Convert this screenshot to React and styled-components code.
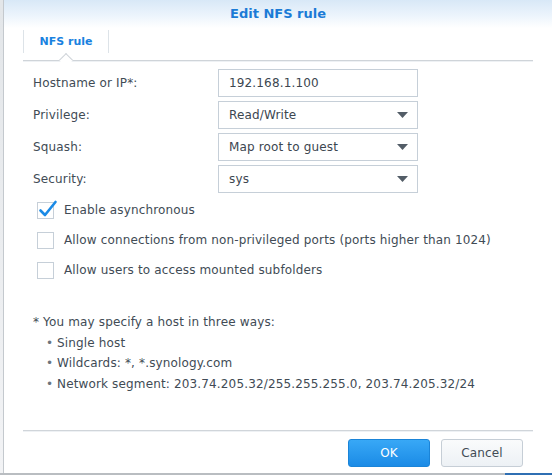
import React from 'react';
import styled, { createGlobalStyle } from 'styled-components';

const Global = createGlobalStyle`
  html, body { margin: 0; padding: 0; background: #ffffff; }
  body { font-family: "DejaVu Sans", Verdana, sans-serif; font-size: 12px; color: #414b55; letter-spacing: 0.15px; }
  * { box-sizing: border-box; }
`;

const Screen = styled.div`
  width: 552px;
  height: 475px;
  overflow: hidden;
  display: grid;
  grid-template-columns: 3px 1fr;
  grid-template-rows: 473px 2px;
  background: #eef0f2;
`;

const Edge = styled.div`
  background: linear-gradient(#e3e6e9, #f2f3f5);
`;

const Dialog = styled.div`
  background: #ffffff;
  border-left: 1px solid #c4c9ce;
  display: flex;
  flex-direction: column;
`;

const BottomStrip = styled.div`
  grid-column: 1 / -1;
  display: flex;
`;

const StripSeg = styled.div`
  height: 2px;
  width: ${(p) => p.w};
  flex: ${(p) => (p.w ? 'none' : '1')};
  background: ${(p) => p.color};
`;

const Header = styled.div`
  height: 28px;
  line-height: 27px;
  text-align: center;
  background: linear-gradient(#d8e8f7 0%, #ecf4fc 55%, #ffffff 100%);
  color: #1b7bd6;
  font-weight: bold;
  font-size: 13px;
  letter-spacing: 0;
`;

const Body = styled.div`
  padding: 0 19px;
  display: flex;
  flex-direction: column;
`;

const TabBar = styled.div`
  margin-top: 2px;
  height: 31px;
  display: flex;
  align-items: flex-start;
  border-bottom: 1px solid #cfd4d9;
  box-shadow: 0 1px 0 #eef1f4;
`;

const Tab = styled.div`
  position: relative;
  width: 86px;
  height: 23px;
  line-height: 23px;
  text-align: center;
  border-left: 1px solid #dde3e8;
  border-right: 1px solid #dde3e8;
  color: #1a82e0;
  font-weight: bold;
  font-size: 11px;
  letter-spacing: 0;

  &::after {
    content: '';
    position: absolute;
    left: calc(50% - 5px);
    top: 25px;
    width: 9px;
    height: 9px;
    background: #ffffff;
    border-top: 1px solid #cfd4d9;
    border-left: 1px solid #cfd4d9;
    transform: rotate(45deg);
  }
`;

const Form = styled.div`
  margin-top: 8px;
  padding-left: 10px;
  display: grid;
  grid-template-columns: 185px 200px;
  row-gap: 4px;
`;

const Label = styled.div`
  height: 28px;
  line-height: 28px;
`;

const Field = styled.div`
  height: 28px;
  border: 1px solid #c6cfd8;
  padding: 0 9px 0 10px;
  display: flex;
  align-items: center;
  justify-content: space-between;
  color: #3c4650;
  background: #ffffff;
`;

const Checks = styled.div`
  margin-top: 2px;
  padding-left: 14px;
  display: flex;
  flex-direction: column;
`;

const CheckRow = styled.div`
  height: 30px;
  display: flex;
  align-items: center;
  gap: 10px;
`;

const Box = styled.div`
  position: relative;
  width: 17px;
  height: 17px;
  border: 1px solid #c6cfd8;
  background: #ffffff;
  flex: none;
`;

const Tick = styled.svg`
  position: absolute;
  left: 0px;
  top: -4px;
`;

const Note = styled.div`
  margin-top: 27px;
  padding-left: 10px;
  line-height: 20.5px;
`;

const Bullets = styled.ul`
  margin: 0;
  padding: 0 0 0 13px;
  list-style: none;
`;

const Bullet = styled.li`
  display: flex;
  gap: 5px;
  &::before {
    content: '•';
    color: #6b747d;
    width: 6px;
  }
`;

const Footer = styled.div`
  margin: auto 19px 0;
  border-top: 1px solid #d0d5da;
  box-shadow: inset 0 1px 0 #eef1f4;
  padding: 8px 10px 6px 0;
  display: flex;
  justify-content: flex-end;
  gap: 11px;
`;

const Button = styled.button`
  width: 82px;
  height: 28px;
  border-radius: 3px;
  font-family: "DejaVu Sans", Verdana, sans-serif;
  font-size: 12px;
  letter-spacing: 0.15px;
  cursor: pointer;
  color: ${(p) => (p.primary ? '#ffffff' : '#414b55')};
  border: 1px solid ${(p) => (p.primary ? '#1a84d8' : '#c6ced6')};
  background: ${(p) =>
    p.primary
      ? 'linear-gradient(#38a8f6, #1b8be6)'
      : 'linear-gradient(#fafbfc, #edf1f5)'};
`;

const Caret = () => (
  <svg width="11" height="6" viewBox="0 0 11 6">
    <path d="M0 0 H11 L5.5 6 Z" fill="#535d67" />
  </svg>
);

const Check = ({ checked, children }) => (
  <CheckRow>
    <Box>
      {checked && (
        <Tick width="20" height="20" viewBox="0 0 20 20">
          <path
            d="M2.5 11.5 L7 16 L17.5 3"
            fill="none"
            stroke="#1a8ae6"
            strokeWidth="2.6"
            strokeLinecap="round"
            strokeLinejoin="round"
          />
        </Tick>
      )}
    </Box>
    <span>{children}</span>
  </CheckRow>
);

export default function App() {
  return (
    <>
      <Global />
      <Screen>
        <Edge />
        <Dialog>
          <Header>Edit NFS rule</Header>
          <Body>
            <TabBar>
              <Tab>NFS rule</Tab>
            </TabBar>
            <Form>
              <Label>Hostname or IP*:</Label>
              <Field>192.168.1.100</Field>
              <Label>Privilege:</Label>
              <Field>
                Read/Write
                <Caret />
              </Field>
              <Label>Squash:</Label>
              <Field>
                Map root to guest
                <Caret />
              </Field>
              <Label>Security:</Label>
              <Field>
                sys
                <Caret />
              </Field>
            </Form>
            <Checks>
              <Check checked>Enable asynchronous</Check>
              <Check>Allow connections from non-privileged ports (ports higher than 1024)</Check>
              <Check>Allow users to access mounted subfolders</Check>
            </Checks>
            <Note>
              * You may specify a host in three ways:
              <Bullets>
                <Bullet>Single host</Bullet>
                <Bullet>Wildcards: *, *.synology.com</Bullet>
                <Bullet>Network segment: 203.74.205.32/255.255.255.0, 203.74.205.32/24</Bullet>
              </Bullets>
            </Note>
          </Body>
          <Footer>
            <Button primary>OK</Button>
            <Button>Cancel</Button>
          </Footer>
        </Dialog>
        <BottomStrip>
          <StripSeg color="#b9bdc1" />
          <StripSeg w="47px" color="#2f6fb3" />
        </BottomStrip>
      </Screen>
    </>
  );
}
